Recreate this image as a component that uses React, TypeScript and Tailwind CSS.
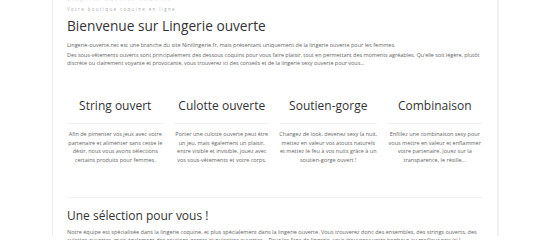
const categories = [
  {
    title: "String ouvert",
    text: "Afin de pimenter vos jeux avec votre partenaire et alimenter sans cesse le désir, nous vous avons sélections certains produits pour femmes.",
  },
  {
    title: "Culotte ouverte",
    text: "Porter une culotte ouverte peut être un jeu, mais également un plaisir, entre visible et invisible, jouez avec vos sous-vêtements et votre corps.",
  },
  {
    title: "Soutien-gorge",
    text: "Changez de look, devenez sexy la nuit, mettez en valeur vos atouts naturels et mettez le feu à vos nuits grâce à un soutien-gorge ouvert !",
  },
  {
    title: "Combinaison",
    text: "Enfillez une combinaison sexy pour vous mettre en valeur et enflammer votre partenaire. Jouez sur la transparence, le résille...",
  },
];

export default function App() {
  return (
    <div className="w-[550px] h-[240px] overflow-hidden bg-white font-['Open_Sans',sans-serif]">
      <div className="ml-[52px] w-[447px] h-full border-l border-[#eeeeee] border-r-2 border-r-[#f0f0f0] px-[14px]">
        <div className="-mt-[4px] h-[6px] text-[6px] leading-[6px] tracking-[1.5px] text-[#e2e2e2]">
          Lingerie ouverte coquine
        </div>
        <p className="mt-[4px] text-[4.5px] leading-[6px] tracking-[1.35px] text-[#aaaaaa]">
          Votre boutique coquine en ligne
        </p>
        <h1 className="mt-[4px] text-[13.7px] leading-[20px] text-[#333333]">
          Bienvenue sur Lingerie ouverte
        </h1>
        <div className="mt-[5px] space-y-[2px] text-[5.5px] leading-[8px] text-[#666666]">
          <p>
            Lingerie-ouverte.net est une branche du site Ninilingerie.fr, mais présentant uniquement de la lingerie ouverte pour les femmes.
          </p>
          <p className="-mr-[10px] tracking-[-0.04px]">
            Des sous-vêtements ouverts sont principalement des dessous coquins pour vous faire plaisir, tout en permettant des moments agréables. Qu'elle soit légère, plutôt discrète ou clairement voyante et provocante, vous trouverez ici des conseils et de la lingerie sexy ouverte pour vous...
          </p>
        </div>
        <div className="mt-[31px] grid grid-cols-4 gap-x-[10px]">
          {categories.map((c) => (
            <div key={c.title} className="flex flex-col">
              <h2 className="pb-[9px] text-center text-[12px] leading-[16px] text-[#333333] border-b border-[#f3f3f3]">
                {c.title}
              </h2>
              <p className="mt-[6px] -mx-[1px] text-center text-[5.5px] leading-[8.6px] text-[#666666]">
                {c.text}
              </p>
            </div>
          ))}
        </div>
        <div className="mt-[33px] border-t border-[#f3f3f3]" />
        <h2 className="mt-[10px] text-[12px] leading-[16px] text-[#333333]">
          Une sélection pour vous !
        </h2>
        <p className="mt-[5px] text-[5.5px] leading-[7.5px] text-[#666666]">
          Notre équipe est spécialisée dans la lingerie coquine, et plus spécialement dans la lingerie ouverte. Vous trouverez donc des ensembles, des strings ouverts, des culottes ouvertes, mais également des soutiens-gorges et nuisettes ouvertes... Pour les fans de lingerie, vous trouverez votre bonheur au meilleur prix ici !
        </p>
      </div>
    </div>
  );
}
